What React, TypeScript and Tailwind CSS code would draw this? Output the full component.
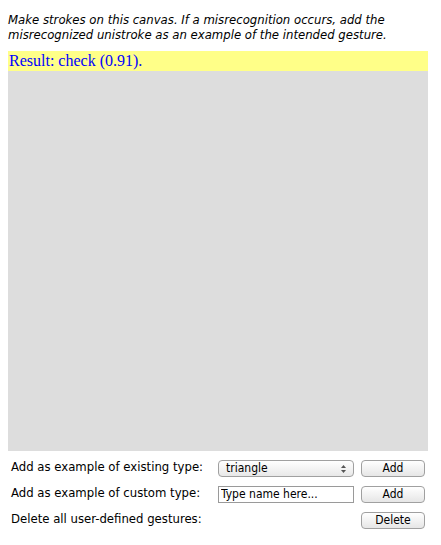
export default function App() {
  return (
    <main className="min-h-screen bg-white px-2 pt-[12px] font-['DejaVu_Sans_Condensed','DejaVu_Sans',sans-serif] text-black">
      <p className="text-[13px] italic leading-[15px]">
        Make strokes on this canvas. If a misrecognition occurs, add the misrecognized unistroke as an example of the
        intended gesture.
      </p>

      {/* canvas */}
      <div className="mt-[9px] w-[420px] h-[400px] bg-[#dddddd]">
        <div className="h-[20px] bg-[#ffff88] px-[1px] font-['Liberation_Serif',serif] text-[16px] leading-[20px] text-[#0000ff]">
          Result: check (0.91).
        </div>
      </div>

      {/* controls */}
      <div className="mt-[9px] pl-[3px] text-[13px] leading-[17px] flex flex-col gap-[9px]">
        <div className="flex items-center">
          <span className="w-[207px] -mt-[4px]">Add as example of existing type:</span>
          <div className="w-[136px] h-[17px] border border-[#a0a0a0] rounded-[4px] bg-gradient-to-b from-white to-[#e8e8e8] flex items-center justify-between pl-[7px] pr-[7px] text-[12px]">
            <span>triangle</span>
            <svg width="5" height="8" viewBox="0 0 5 8" className="fill-[#555]">
              <path d="M2.5 0 L5 3 L0 3 Z" />
              <path d="M0 5 L5 5 L2.5 8 Z" />
            </svg>
          </div>
          <button className="ml-[7px] w-[64px] h-[17px] border border-[#a0a0a0] rounded-[4px] bg-gradient-to-b from-white to-[#e6e6e6] text-[12px] leading-[15px]">
            Add
          </button>
        </div>
        <div className="flex items-center">
          <span className="w-[207px] -mt-[4px]">Add as example of custom type:</span>
          <input
            className="w-[136px] h-[17px] border border-[#9a9a9a] bg-white px-[2px] text-[12px] outline-none"
            defaultValue="Type name here..."
          />
          <button className="ml-[7px] w-[64px] h-[17px] border border-[#a0a0a0] rounded-[4px] bg-gradient-to-b from-white to-[#e6e6e6] text-[12px] leading-[15px]">
            Add
          </button>
        </div>
        <div className="flex items-center">
          <span className="w-[350px] -mt-[4px]">Delete all user-defined gestures:</span>
          <button className="w-[64px] h-[17px] border border-[#a0a0a0] rounded-[4px] bg-gradient-to-b from-white to-[#e6e6e6] text-[12px] leading-[15px]">
            Delete
          </button>
        </div>
      </div>
    </main>
  )
}
